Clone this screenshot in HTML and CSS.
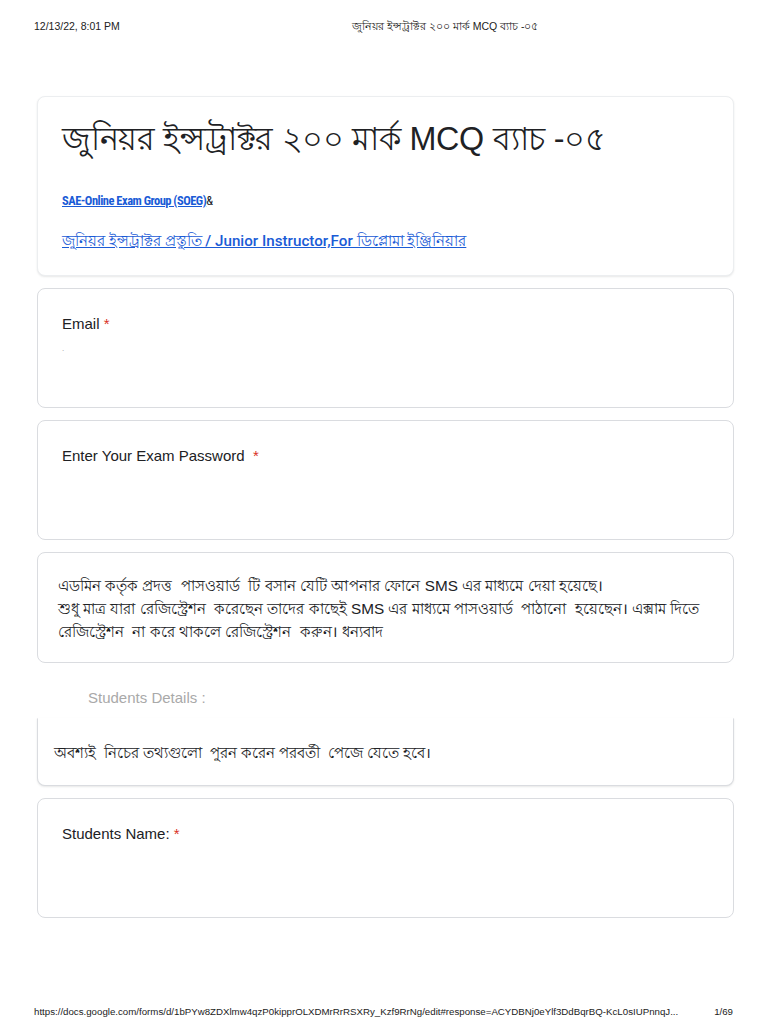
FILE: index.html
```html
<!DOCTYPE html>
<html>
<head>
<meta charset="utf-8">
<link rel="stylesheet" href="styles.css">
</head>
<body>
<div class="page">
  <header class="print-head">
    <span class="date">12/13/22, 8:01 PM</span>
    <span class="doc-title">জুনিয়র ইন্সট্রাক্টর ২০০ মার্ক MCQ ব্যাচ -০৫</span>
  </header>
  <main class="form">
    <section class="card card-head">
      <h1 class="form-title">জুনিয়র ইন্সট্রাক্টর ২০০ মার্ক MCQ ব্যাচ -০৫</h1>
      <p class="desc desc-1"><a class="link">SAE-Online Exam Group (SOEG)</a><span class="amp">&amp;</span></p>
      <p class="desc desc-2"><a class="link">জুনিয়র ইন্সট্রাক্টর প্রস্তুতি / Junior Instructor,For ডিপ্লোমা ইঞ্জিনিয়ার</a></p>
    </section>
    <section class="card q">
      <div class="label">Email <span class="req">*</span></div>
      <div class="mark">.</div>
    </section>
    <section class="card q">
      <div class="label">Enter Your Exam Password &nbsp;<span class="req">*</span></div>
    </section>
    <section class="card note">
      <p class="bn">এডমিন কর্তৃক প্রদত্ত &nbsp;পাসওয়ার্ড &nbsp;টি বসান যেটি আপনার ফোনে SMS এর মাধ্যমে দেয়া হয়েছে।<br>শুধু মাত্র যারা রেজিস্ট্রেশন &nbsp;করেছেন তাদের কাছেই SMS এর মাধ্যমে পাসওয়ার্ড &nbsp;পাঠানো &nbsp;হয়েছেন। এক্সাম দিতে রেজিস্ট্রেশন &nbsp;না করে থাকলে রেজিস্ট্রেশন &nbsp;করুন। ধন্যবাদ</p>
    </section>
    <div class="section-title">Students Details :</div>
    <section class="card section-desc">
      <p class="bn bn-small">অবশ্যই &nbsp;নিচের তথ্যগুলো &nbsp;পুরন করেন পরবর্তী &nbsp;পেজে যেতে হবে।</p>
    </section>
    <section class="card q">
      <div class="label">Students Name: <span class="req">*</span></div>
    </section>
  </main>
  <footer class="print-foot">
    <span class="url">https://docs.google.com/forms/d/1bPYw8ZDXlmw4qzP0kipprOLXDMrRrRSXRy_Kzf9RrNg/edit#response=ACYDBNj0eYlf3DdBqrBQ-KcL0sIUPnnqJ...</span>
    <span class="pages">1/69</span>
  </footer>
</div>
</body>
</html>
```
FILE: styles.css
```css
html, body {
  margin: 0;
  padding: 0;
  background: #ffffff;
}
body {
  font-family: "Liberation Sans", Arial, "Noto Sans", sans-serif;
  color: #202124;
}
.page {
  width: 768px;
  height: 1024px;
  position: relative;
  overflow: hidden;
}
.print-head {
  display: flex;
  align-items: baseline;
  padding: 19px 0 0 34px;
  height: 96px;
  box-sizing: border-box;
  font-size: 10.5px;
  color: #222;
}
.date {
  width: 318px;
}
.doc-title {
  font-size: 10.5px;
}
.form {
  margin-left: 37px;
  width: 697px;
  display: flex;
  flex-direction: column;
}
.card {
  box-sizing: border-box;
  border: 1px solid #dadce0;
  border-radius: 8px;
  background: #fff;
  margin-bottom: 12px;
  padding: 0 24px;
}
.card-head {
  height: 180px;
  padding-top: 14px;
  border-color: #eceef0;
  box-shadow: 0 1px 2px rgba(60, 64, 67, 0.12);
}
.form-title {
  margin: 0;
  font-weight: 400;
  font-size: 32.3px;
  line-height: 56px;
  color: #202124;
  letter-spacing: -0.3px;
}
.desc {
  margin: 26px 0 0;
  font-size: 13px;
  line-height: 16px;
  font-family: Roboto, "Liberation Sans", sans-serif;
  font-weight: 500;
  color: #202124;
}
.desc-1 {
  font-family: "Liberation Sans Narrow", "Roboto Condensed", Roboto, sans-serif;
  font-weight: 700;
  font-size: 12.5px;
  letter-spacing: -0.5px;
}
.amp {
  font-weight: 400;
}
.desc-2 {
  margin-top: 22px;
  font-size: 15.2px;
  line-height: 20px;
}
.link {
  color: #1a5bd6;
  text-decoration: underline;
}
.q {
  height: 120px;
  padding-top: 25px;
}
.label {
  font-size: 15px;
  line-height: 20px;
  color: #202124;
}
.req {
  color: #d93025;
}
.mark {
  margin-top: 10px;
  font-size: 8px;
  line-height: 10px;
  color: #999;
}
.note {
  height: 111px;
  padding: 21px 4px 0 20px;
}
.bn {
  margin: 0;
  font-size: 15.3px;
  line-height: 23px;
  color: #202124;
}
.bn-small {
  font-size: 14.5px;
}
.section-title {
  margin: 13px 0 0 51px;
  font-size: 15px;
  line-height: 20px;
  color: #a9a9a9;
  height: 30px;
}
.section-desc {
  height: 68px;
  padding: 23px 0 0 16px;
  border-top-color: transparent;
  border-top-left-radius: 0;
  border-top-right-radius: 0;
  box-shadow: 0 1px 2px rgba(60, 64, 67, 0.12);
}
.print-foot {
  position: absolute;
  left: 34px;
  right: 35px;
  top: 1006px;
  display: flex;
  justify-content: space-between;
  font-size: 9.7px;
  color: #222;
}
```
